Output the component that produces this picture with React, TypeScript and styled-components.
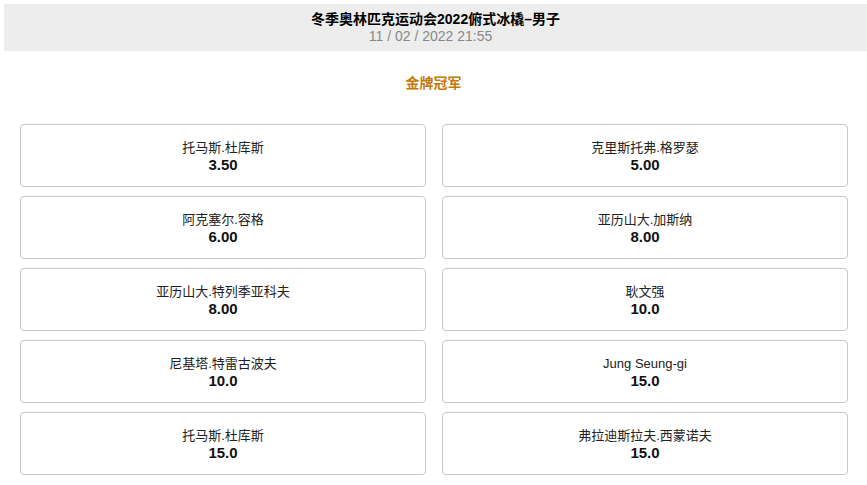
import styled, { createGlobalStyle } from "styled-components";

const GlobalStyle = createGlobalStyle`
  body {
    margin: 0;
    background: #fff;
    font-family: "Liberation Sans", Arial, "Noto Sans CJK SC", sans-serif;
  }
`;

const Header = styled.div`
  margin: 4px 0 0 4px;
  height: 47px;
  background: #ededed;
  display: flex;
  flex-direction: column;
  align-items: center;
  justify-content: center;
  padding-top: 1px;
  box-sizing: border-box;
`;

const Title = styled.div`
  font-size: 14px;
  font-weight: bold;
  color: #000;
  line-height: 17px;
`;

// the date sits a few px left of the title's centre in the original
const DateLine = styled.div`
  font-size: 14px;
  color: #888;
  line-height: 17px;
  padding-right: 10px;
`;

const Section = styled.div`
  text-align: center;
  font-size: 14px;
  font-weight: bold;
  color: #c4780a;
  line-height: 17px;
  margin: 24px 0 0;
`;

const Grid = styled.div`
  display: grid;
  grid-template-columns: 406px 406px;
  column-gap: 16px;
  row-gap: 9px;
  padding: 0 0 0 20px;
  margin-top: 32px;
`;

const Card = styled.div`
  height: 63px;
  box-sizing: border-box;
  border: 1px solid #c8c8c8;
  border-radius: 4px;
  display: flex;
  flex-direction: column;
  align-items: center;
  justify-content: center;
`;

const Name = styled.div`
  font-size: 13px;
  color: #222;
  line-height: 17px;
`;

const Odds = styled.div`
  font-size: 15px;
  font-weight: bold;
  color: #111;
  line-height: 17px;
`;

const runners = [
  { name: "托马斯.杜库斯", odds: "3.50" },
  { name: "克里斯托弗.格罗瑟", odds: "5.00" },
  { name: "阿克塞尔.容格", odds: "6.00" },
  { name: "亚历山大.加斯纳", odds: "8.00" },
  { name: "亚历山大.特列季亚科夫", odds: "8.00" },
  { name: "耿文强", odds: "10.0" },
  { name: "尼基塔.特雷古波夫", odds: "10.0" },
  { name: "Jung Seung-gi", odds: "15.0" },
  { name: "托马斯.杜库斯", odds: "15.0" },
  { name: "弗拉迪斯拉夫.西蒙诺夫", odds: "15.0" },
];

function App() {
  return (
    <>
      <GlobalStyle />
      <Header>
        <Title>冬季奥林匹克运动会2022俯式冰橇–男子</Title>
        <DateLine>11 / 02 / 2022 21:55</DateLine>
      </Header>
      <Section>金牌冠军</Section>
      <Grid>
        {runners.map((r, i) => (
          <Card key={i}>
            <Name>{r.name}</Name>
            <Odds>{r.odds}</Odds>
          </Card>
        ))}
      </Grid>
    </>
  );
}

export default App;
